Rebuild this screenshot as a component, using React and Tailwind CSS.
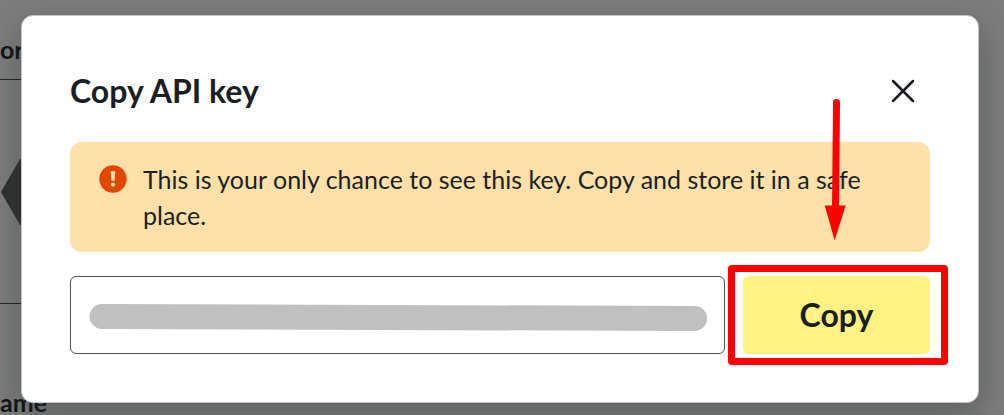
import React from "react";

function PageBehind() {
  return (
    <div aria-hidden="true" className="absolute inset-0 overflow-hidden bg-[#7d7d7d] text-[25px] leading-9 font-bold text-[#111418]">
      <div className="w-16">
        <div className="flex h-20 items-end border-b border-[#222] pb-3">or</div>
        <div className="flex h-56 items-center border-b border-[#222]">
          <svg viewBox="0 0 40 70" className="h-[70px] w-10" fill="#303031">
            <path d="M1 35 L20 2 H40 V68 H20 Z" />
          </svg>
        </div>
        <div className="pt-20">ame</div>
      </div>
    </div>
  );
}

function WarningIcon() {
  return (
    <svg viewBox="0 0 28 28" className="mt-1 h-7 w-7 shrink-0" aria-hidden="true">
      <circle cx="14" cy="14" r="13.7" fill="#e04800" />
      <path d="M11.7 6.2h4.6l-.7 9.6h-3.2z" fill="#ffe0a9" />
      <circle cx="14" cy="19.6" r="2.1" fill="#ffe0a9" />
    </svg>
  );
}

function Highlight() {
  return (
    <>
      <div className="pointer-events-none absolute -inset-y-[11px] -left-[15px] -right-[18px] rounded border-[7px] border-[#ff0000]" />
      <svg viewBox="0 0 28 146" className="pointer-events-none absolute -top-[180px] left-[80px] h-[146px] w-7" aria-hidden="true">
        <path d="M13.5 6.5 L12.5 114" stroke="#ff0000" strokeWidth="7" strokeLinecap="round" />
        <path d="M1.8 109.5 H22.7 L11.6 144.5 Z" fill="#ff0000" />
      </svg>
    </>
  );
}

export default function App() {
  return (
    <div className="relative min-h-screen overflow-hidden font-['Lato',sans-serif] text-[#1b1e24]">
      <PageBehind />
      <div className="relative pt-[15px] pr-[25px] pb-3 pl-[21px]">
        <section
          role="dialog"
          aria-modal="true"
          aria-labelledby="dialog-title"
          className="rounded-xl border border-[#c4c4c4] bg-white p-12 shadow-[0_12px_36px_rgba(40,48,48,0.4)]"
        >
          <header className="flex h-[54px] items-center justify-between pr-[11px]">
            <h1 id="dialog-title" className="text-[32px] leading-9 font-bold">Copy API key</h1>
            <button type="button" aria-label="Close" className="flex h-8 w-8 items-center justify-center">
              <svg viewBox="0 0 24 24" className="h-6 w-6" fill="none" stroke="#1b1b23" strokeWidth="2.5" strokeLinecap="round">
                <path d="M2 2 L22 22 M22 2 L2 22" />
              </svg>
            </button>
          </header>
          <div className="mt-6 flex gap-4 rounded-xl bg-[#ffe0a9] py-[19px] pr-14 pl-[29px]">
            <WarningIcon />
            <p className="text-[25px] leading-9">
              This is your only chance to see this key. Copy and store it in a safe place.
            </p>
          </div>
          <div className="mt-6 flex gap-[18px]">
            <div className="relative flex-1">
              <input
                type="text"
                readOnly
                aria-label="API key"
                className="block h-[78px] w-full rounded-md border border-[#515256] bg-white px-5 outline-none"
              />
              <svg className="pointer-events-none absolute top-[26px] left-[18px] h-8 w-[calc(100%-36px)] overflow-visible" aria-hidden="true">
                <line x1="14" y1="14.5" x2="98%" y2="16.5" stroke="#c0c0c0" strokeWidth="25" strokeLinecap="round" />
              </svg>
            </div>
            <div className="relative w-[187px]">
              <button type="button" className="h-[78px] w-full rounded-md bg-[#fff283] text-[32px] leading-9 font-bold">
                Copy
              </button>
              <Highlight />
            </div>
          </div>
        </section>
      </div>
    </div>
  );
}
